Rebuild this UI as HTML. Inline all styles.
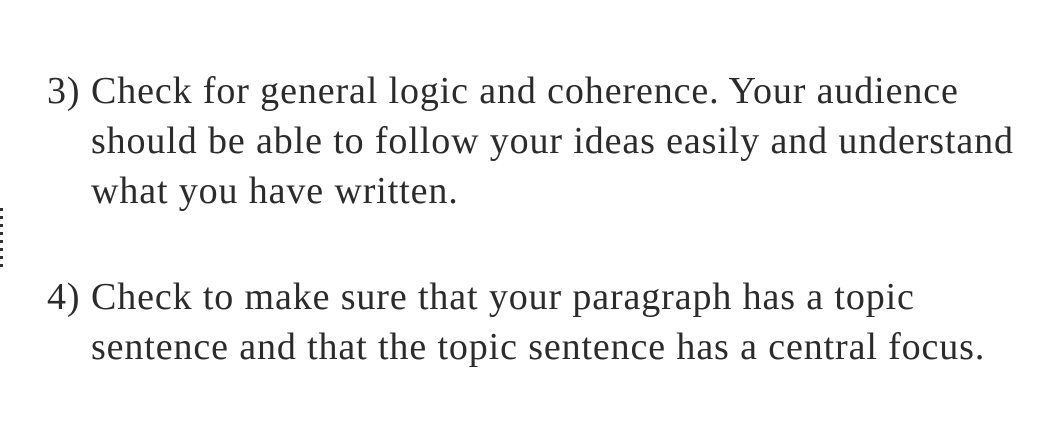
<!DOCTYPE html>
<html><head><style>
html,body{margin:0;padding:0;background:#fff;width:1062px;height:437px;overflow:hidden}
.p{position:absolute;left:91px;font-family:"Liberation Serif",serif;font-size:38px;line-height:50px;color:#2b2b2b;letter-spacing:0.88px;white-space:nowrap}
.n{position:absolute;left:-44px}
.dots{position:absolute;left:0;top:208px;width:3px;height:62px;background:repeating-linear-gradient(#333 0 3px,transparent 3px 8px)}
</style></head><body>
<div class="dots"></div>
<div class="p" style="top:66px"><span class="n">3)</span>Check for general logic and coherence. Your audience<br>should be able to follow your ideas easily and understand<br>what you have written.</div>
<div class="p" style="top:272px"><span class="n">4)</span>Check to make sure that your paragraph has a topic<br>sentence and that the topic sentence has a central focus.</div>
</body></html>
